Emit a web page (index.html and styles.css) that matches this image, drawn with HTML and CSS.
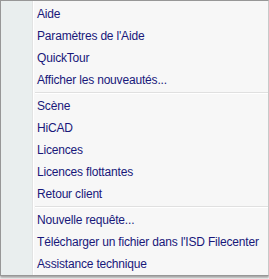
FILE: index.html
```html
<!doctype html>
<html>
<head>
  <meta charset="utf-8">
  <title>Menu Aide</title>
  <link rel="stylesheet" href="styles.css">
</head>
<body>
  <div class="menu">
    <div class="gutter"></div>
    <ul class="items">
      <li>Aide</li>
      <li>Paramètres de l'Aide</li>
      <li>QuickTour</li>
      <li>Afficher les nouveautés...</li>
      <li class="sep"></li>
      <li>Scène</li>
      <li>HiCAD</li>
      <li>Licences</li>
      <li>Licences flottantes</li>
      <li>Retour client</li>
      <li class="sep"></li>
      <li>Nouvelle requête...</li>
      <li>Télécharger un fichier dans l'ISD Filecenter</li>
      <li>Assistance technique</li>
    </ul>
  </div>
</body>
</html>
```

FILE: styles.css
```css
* {
  margin: 0; padding: 0;
  box-sizing: border-box;
}
html, body {
  width: 100%;
  height: 100%;
  overflow: hidden;
  background: #fff;
}
.menu {
  position: relative;
  display: flex;
  width: 269px;
  height: 276px;
  padding: 2px 0;
  background: #f7f7f7;
  border: 1px solid #979797;
  border-right-color: #c8c8c8;
  box-shadow: 0 2px 2px rgba(0,0,0,0.35);
  font-family: 'Liberation Sans', Arial, sans-serif;
  font-size: 12px;
  letter-spacing: -0.18px;
  color: #18187a;
}
.gutter {
  position: absolute;
  top: 0; bottom: 0; left: 0;
  width: 32px;
  background: #e9eeee;
  border-right: 1px solid #e2e3e3;
  box-shadow: 1px 0 0 #fff;
}
.items {
  list-style: none;
  flex: 1;
  position: relative;
}
.items li {
  height: 22px;
  line-height: 22px;
  padding-left: 36px;
  white-space: nowrap;
}
.items li.sep {
  height: 2px;
  margin: 1px 0 1px 34px;
  padding: 0;
  border-top: 1px solid #e0e0e0;
  border-bottom: 1px solid #fff;
}
```
